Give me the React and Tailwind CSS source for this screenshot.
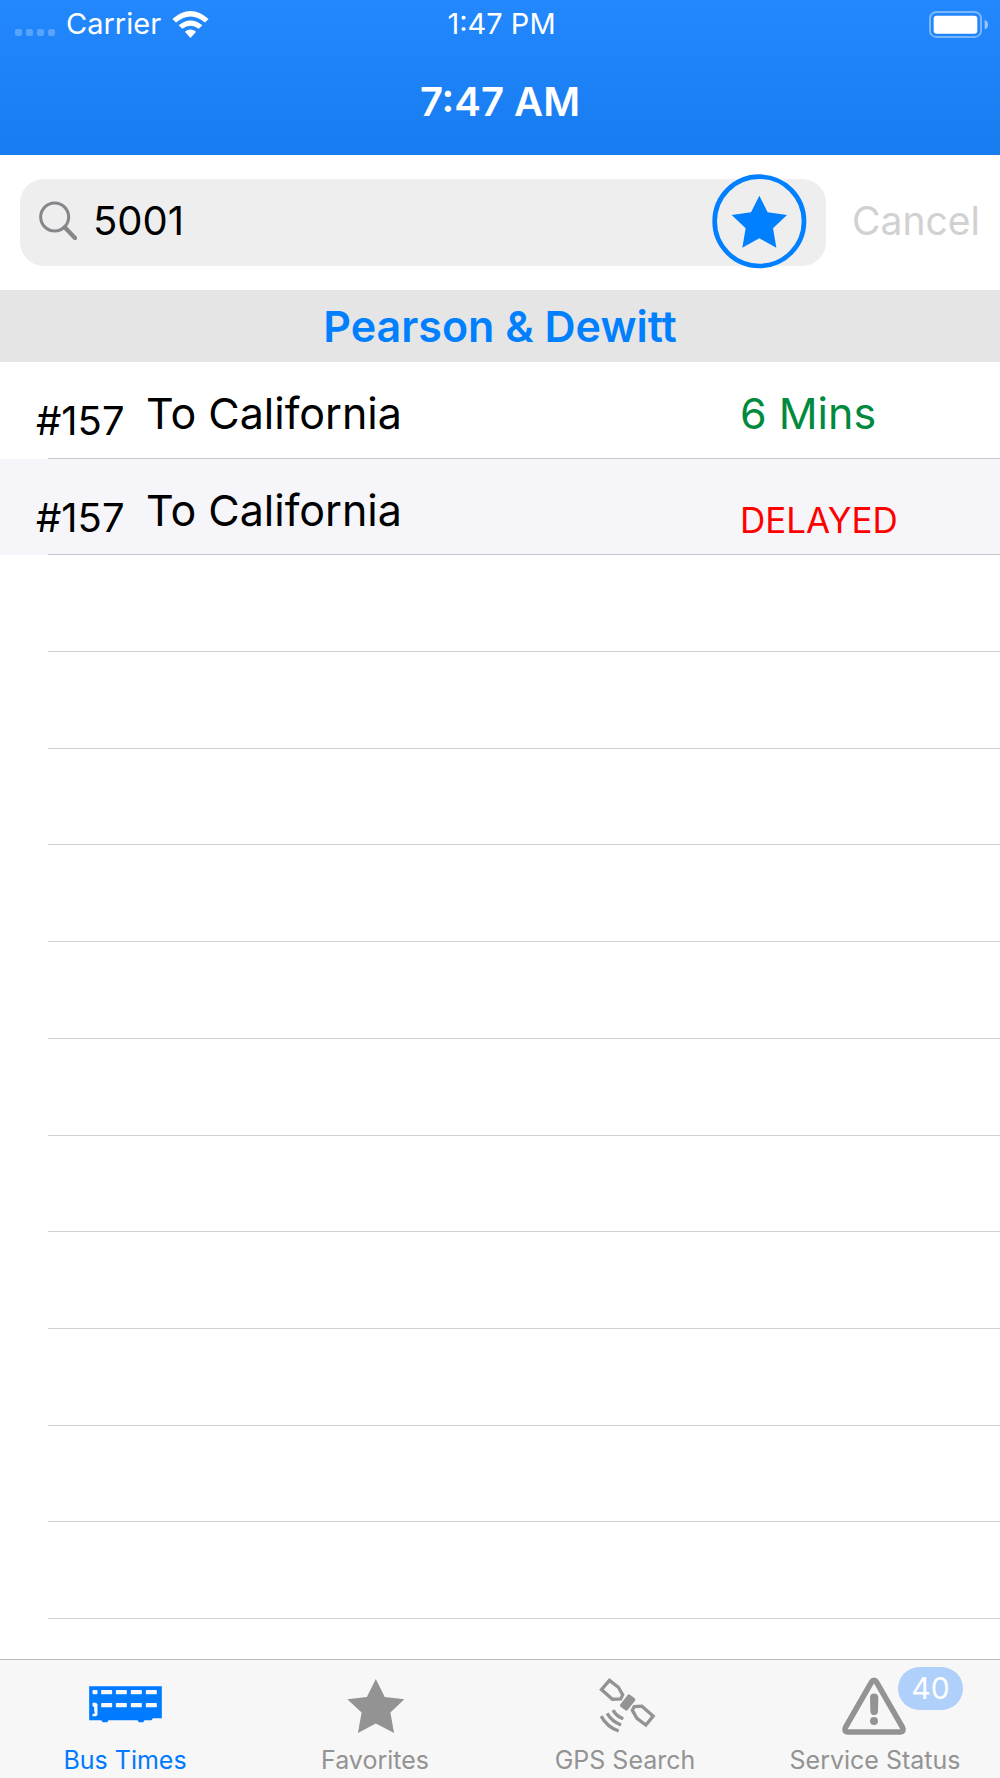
import { useState } from 'react';

const ARRIVALS = [
  { id: 1, route: '#157', destination: 'To California', eta: '6 Mins', delayed: false },
  { id: 2, route: '#157', destination: 'To California', eta: 'DELAYED', delayed: true },
];

// the list keeps drawing separators below the last arrival
const EMPTY_ROWS = 11;

const TABS = [
  { id: 'times',     label: 'Bus Times',      Icon: BusIcon },
  { id: 'favorites', label: 'Favorites',      Icon: StarTabIcon },
  { id: 'gps',       label: 'GPS Search',     Icon: SatelliteIcon },
  { id: 'status',    label: 'Service Status', Icon: WarningIcon, badge: 40 },
];

function WifiIcon() {
  return (
    <svg viewBox="0 0 110 82" className="h-[27px] w-[37px]" fill="currentColor" aria-hidden="true">
      <path d="M0 24 Q55 -24 110 24 L99 35 Q55 -2 11 35 Z" />
      <path d="M19 43 Q55 14 91 43 L80 54 Q55 36 30 54 Z" />
      <path d="M38 63 Q55 50 72 63 L55 82 Z" />
    </svg>
  );
}

function BatteryIcon() {
  return (
    <svg viewBox="0 0 177 81" className="h-[27px] w-[59px]" aria-hidden="true">
      <rect x="3" y="3" width="153" height="75" rx="19" fill="none" stroke="#fff" strokeOpacity="0.4" strokeWidth="6" />
      <rect x="14" y="14" width="131" height="54" rx="9" fill="#fff" />
      <path d="M167 27 Q177 31 177 41 Q177 51 167 55 Z" fill="#fff" fillOpacity="0.55" />
    </svg>
  );
}

function SearchIcon() {
  return (
    <svg viewBox="0 0 114 117" className="h-[39px] w-[38px] shrink-0" fill="none" stroke="#87878b" aria-hidden="true">
      <circle cx="47" cy="48" r="42" strokeWidth="9" />
      <path d="M77 79 L108 111" strokeWidth="13" strokeLinecap="round" />
    </svg>
  );
}

function BusIcon() {
  return (
    <svg viewBox="0 5 218 108" className="h-9 w-[73px] shrink-0 overflow-visible" fill="currentColor" aria-hidden="true">
      <path d="M0 0 H218 V96 H191 L187 102 H166 L162 108 H149 L145 102 H58 L54 108 H41 L36 102 H0 Z" />
      <g fill="#f7f7f7">
        <rect x="10" y="11" width="15" height="13" rx="3" />
        <path d="M10 49 H21 L25 54 V86 L20 90 H10 V82 H17 L15 73 V63 L10 59 Z" />
        {[36, 80, 125, 170].map(x => <rect key={x} x={x} y="11" width="33" height="13" rx="2" />)}
        {[36, 80, 125, 170].map(x => <rect key={x} x={x} y="50" width="33" height="13" rx="2" />)}
      </g>
    </svg>
  );
}

function StarTabIcon() {
  return (
    <svg viewBox="142 236 172 163" className="h-[54px] w-[57px] overflow-visible" fill="currentColor" aria-hidden="true">
      <path d="M229 236 L256 290 L315 297 L273 337 L284 399 L229 370 L175 399 L186 337 L143 297 L202 290 Z" />
    </svg>
  );
}

function SatelliteIcon() {
  return (
    <svg viewBox="171 234 168 166" className="h-[55px] w-14 overflow-visible" fill="none" stroke="currentColor" strokeWidth="10" aria-hidden="true">
      <path d="M208 241 L184 269 L217 298 L242 297 L248 285 L235 262 Z" />
      <path d="M318 376 L340 349 L306 319 L283 320 L277 331 L291 356 Z" />
      <rect x="249" y="285" width="28" height="46" rx="5" transform="rotate(38 263 308)" fill="currentColor" stroke="none" />
      <path d="M219 331 Q229 350 250 357" />
      <path d="M201 341 Q215 365 243 376" />
      <path d="M183 349 Q202 383 236 394" />
    </svg>
  );
}

function WarningIcon() {
  return (
    <svg viewBox="216 231 192 172" className="h-[57px] w-16 overflow-visible" aria-hidden="true">
      <path
        d="M301 247 Q309 235 317 247 L395 383 Q401 396 388 397 H230 Q217 396 223 383 Z"
        fill="none" stroke="currentColor" strokeWidth="17" strokeLinejoin="round"
      />
      <path d="M297 294 Q297 281 309 281 Q322 281 322 294 L321 335 Q320 346 309 346 Q299 346 298 335 Z" fill="currentColor" />
      <circle cx="309" cy="364" r="12" fill="currentColor" />
    </svg>
  );
}

function StatusBar() {
  return (
    <div className="grid h-12 grid-cols-3 items-center pl-[15px] pr-3 text-[29px] leading-8">
      <div className="flex items-center gap-[11px]">
        <div className="flex gap-1 pt-4">
          {[0, 1, 2, 3].map(i => <span key={i} className="size-[7px] rounded-xs bg-white/25" />)}
        </div>
        <span>Carrier</span>
        <WifiIcon />
      </div>
      <span className="text-center">1:47 PM</span>
      <div className="flex justify-end">
        <BatteryIcon />
      </div>
    </div>
  );
}

export default function App() {
  const [stop, setStop] = useState('5001');
  const [tab, setTab]   = useState('times');

  return (
    <div className="flex min-h-screen flex-col bg-white font-['Inter',sans-serif] text-black">
      <header className="bg-linear-to-b from-[#2388fd] to-[#187cf1] text-white">
        <StatusBar />
        <h1 className="flex h-[107px] items-center justify-center text-[40px] font-semibold">7:47 AM</h1>
      </header>

      {/* Stop search */}
      <form className="flex items-center gap-[26px] py-6 pl-5 pr-5" onSubmit={e => e.preventDefault()}>
        <div className="relative flex h-[87px] min-w-0 flex-1 items-center gap-4 rounded-3xl bg-[#eeeeee] pl-[19px] pr-32 pb-1">
          <SearchIcon />
          <input
            type="text"
            aria-label="Stop number"
            value={stop}
            onChange={e => setStop(e.target.value)}
            className="min-w-0 flex-1 bg-transparent text-[40px] leading-12 outline-none"
          />
          <button type="button" aria-label="Add to favorites" className="absolute -top-[5px] right-[19px] size-[95px] text-[#0080ff]">
            <svg viewBox="157 71 285 285" className="size-full" fill="currentColor" aria-hidden="true">
              <circle cx="299" cy="213" r="134" fill="none" stroke="currentColor" strokeWidth="14" />
              <path d="M299 136 L324 186 L382 194 L340 234 L350 292 L299 264 L248 292 L258 234 L216 194 L274 186 Z" />
            </svg>
          </button>
        </div>
        <button type="button" disabled className="pb-1 text-[39px] leading-12 text-[#d1d1d1]">Cancel</button>
      </form>

      <main className="flex flex-1 flex-col">
        <h2 className="flex h-[72px] items-center justify-center bg-[#e5e5e5] text-[43px] font-semibold text-[#0080ff]">
          Pearson &amp; Dewitt
        </h2>

        {/* Arrivals */}
        <ul className="grid flex-1 auto-rows-fr pb-10">
          {ARRIVALS.map(a => (
            <li key={a.id} className="relative flex min-h-20 items-center pl-9 even:bg-[#f5f5fa] after:absolute after:bottom-0 after:left-12 after:right-0 after:h-px after:bg-[#c8c8cc]">
              <span className="w-[110px] shrink-0 pt-[22px] text-[40px] leading-12">{a.route}</span>
              <span className="flex-1 pt-1.5 text-[43px] leading-12">{a.destination}</span>
              {a.delayed
                ? <span className="w-[260px] pt-[26px] text-[35px] leading-12 text-[#ff0000]">{a.eta}</span>
                : <span className="w-[260px] pt-1.5 text-[43px] leading-12 text-[#008a3e]">{a.eta}</span>}
            </li>
          ))}
          {[...Array(EMPTY_ROWS)].map((_, i) => (
            <li key={i} aria-hidden="true" className="ml-12 min-h-20 border-b border-[#d2d2d5]" />
          ))}
        </ul>
      </main>

      <nav className="grid h-[119px] grid-cols-4 border-t border-[#bdbdbf] bg-[#f7f7f7]">
        {TABS.map(({ id, label, Icon, badge }) => (
          <button
            key={id}
            type="button"
            onClick={() => setTab(id)}
            aria-current={tab === id ? 'page' : undefined}
            className={`flex flex-col items-center justify-end pb-0.5 ${tab === id ? 'text-[#007aff]' : 'text-[#939393]'}`}
          >
            <span className="relative flex h-[57px] w-16 items-center justify-center">
              <Icon />
              {badge && (
                <span className="absolute -top-2.5 left-[55px] flex h-[43px] w-[65px] items-center justify-center rounded-full bg-[#afd0fb] text-[30px] text-white">
                  {badge}
                </span>
              )}
            </span>
            <span className="mt-2.5 text-[25px] leading-8">{label}</span>
          </button>
        ))}
      </nav>
    </div>
  );
}
